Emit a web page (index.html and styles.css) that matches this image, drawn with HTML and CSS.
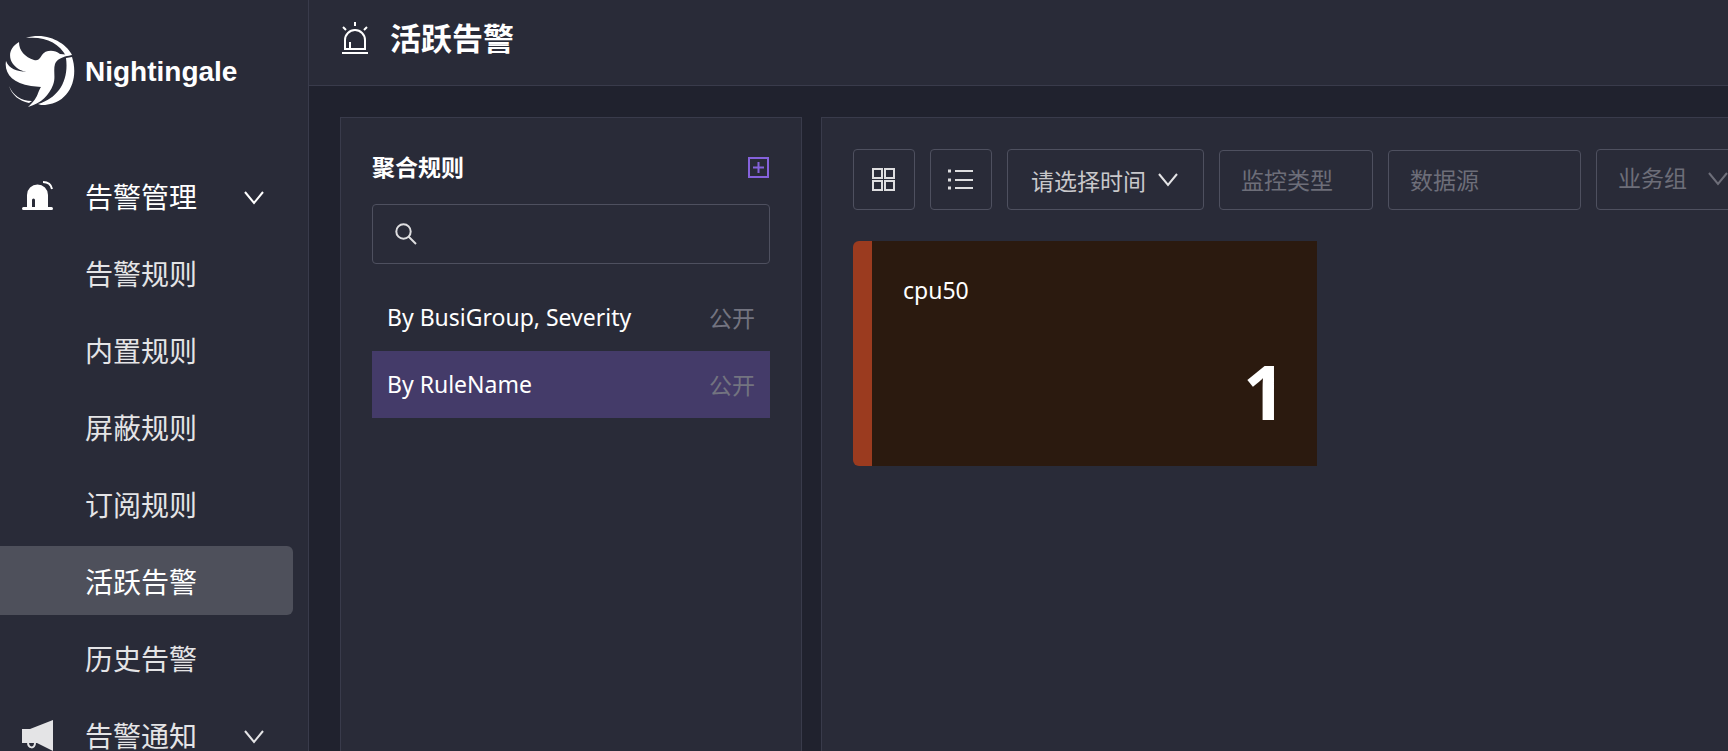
FILE: index.html
```html
<!DOCTYPE html>
<html lang="zh-CN">
<head>
<meta charset="utf-8">
<meta name="viewport" content="width=device-width, initial-scale=1">
<title>活跃告警 - Nightingale</title>
<link rel="stylesheet" href="styles.css">
</head>
<body>
<div class="app">
  <aside class="sidebar">
    <a class="brand" href="#">
      <svg class="brand-mark" viewBox="0 0 72 74" aria-hidden="true">
        <path d="M21 3C42-4 62 9 67 20L61 21C54 8 40 1 21 3Z"/>
        <path d="M61 23L67 22C74 43 65 70 36 70L33 69C54 63 64 45 61 23Z"/>
        <path d="M14 7C4 13 3 22 8 29C13 35 18 36 21 37C12 36 4 34 1 26C-1 38 7 48 26 51L36 52C32 58 34 62 23 72C37 68 44 60 48 50C51 43 48 36 50 29C52 24 57 22 66 20L55 19C49 14 40 15 37 20C34 25 32 26 29 25C20 22 14 16 14 7Z"/>
        <path d="M4 51C8 60 16 66 27 66L24 68C14 66 7 60 4 51Z"/>
      </svg>
      <span class="brand-name">Nightingale</span>
    </a>
    <nav class="menu">
      <button class="menu-item menu-group open" type="button" aria-expanded="true">
        <svg class="menu-icon" viewBox="0 0 32 32" aria-hidden="true">
          <path d="M5 27V15a10.500 10.500 0 0 1 21 0v12H13v-7a1 1 0 0 0-3 0v7Z"/>
          <rect x="0" y="27" width="31" height="3" rx="1.500"/>
          <path class="line" d="M21 2c5 0 8 2 9 7"/>
        </svg>
        <span>告警管理</span>
        <svg class="chevron" viewBox="0 0 20 14" aria-hidden="true"><path d="M1 1l9 11 9-11"/></svg>
      </button>
      <a class="menu-item" href="#">告警规则</a>
      <a class="menu-item" href="#">内置规则</a>
      <a class="menu-item" href="#">屏蔽规则</a>
      <a class="menu-item" href="#">订阅规则</a>
      <a class="menu-item active" href="#" aria-current="page">活跃告警</a>
      <a class="menu-item" href="#">历史告警</a>
      <button class="menu-item menu-group" type="button" aria-expanded="false">
        <svg class="menu-icon" viewBox="0 0 32 32" aria-hidden="true">
          <path d="M0 10h8L31 1v31L15 24H0Z"/>
          <path class="line" d="M6 23c0 7 7 7 7 1"/>
        </svg>
        <span>告警通知</span>
        <svg class="chevron" viewBox="0 0 20 14" aria-hidden="true"><path d="M1 1l9 11 9-11"/></svg>
      </button>
    </nav>
  </aside>
  <div class="page">
    <header class="page-header">
      <svg class="page-icon" viewBox="0 0 26 32" aria-hidden="true">
        <path d="M3 27V18a10 10 0 0 1 20 0v9Z"/>
        <path d="M8 26v-6M0 31h26M13 0v4M1 5l3 3M25 5l-3 3"/>
      </svg>
      <h1>活跃告警</h1>
    </header>
    <main class="content">
      <section class="panel rules">
        <div class="rules-head">
          <h2>聚合规则</h2>
          <button class="add" type="button" aria-label="新增聚合规则">
            <svg viewBox="0 0 21 21" aria-hidden="true"><rect x="1" y="1" width="19" height="19"/><path d="M10.500 5v11M5 10.500h11"/></svg>
          </button>
        </div>
        <label class="search">
          <svg viewBox="0 0 22 22" aria-hidden="true"><circle cx="8.500" cy="8.500" r="7.200"/><path d="M13.500 13.500l7.500 7.500"/></svg>
          <input type="search" aria-label="搜索聚合规则">
        </label>
        <ul class="rule-list">
          <li><a class="rule" href="#">By BusiGroup, Severity <span>公开</span></a></li>
          <li><a class="rule selected" href="#">By RuleName <span>公开</span></a></li>
        </ul>
      </section>
      <section class="panel alerts">
        <div class="toolbar">
          <button class="control icon-button" type="button" aria-label="卡片视图">
            <svg width="24" height="24" viewBox="0 0 24 24" aria-hidden="true"><path d="M1 1h9v9H1ZM13 1h9v9h-9ZM1 13h9v9H1ZM13 13h9v9h-9Z"/></svg>
          </button>
          <button class="control icon-button" type="button" aria-label="列表视图">
            <svg width="26" height="22" viewBox="0 0 26 22" aria-hidden="true"><path d="M7 2h18M7 11h18M7 19h18"/><path stroke-width="3" d="M0 2h3M0 11h3M0 19h3"/></svg>
          </button>
          <button class="control time" type="button">请选择时间
            <svg class="chevron" viewBox="0 0 20 14" aria-hidden="true"><path d="M1 1l9 11 9-11"/></svg>
          </button>
          <input class="control type" type="text" placeholder="监控类型" aria-label="监控类型">
          <input class="control source" type="text" placeholder="数据源" aria-label="数据源">
          <div class="group">
            <select class="control" aria-label="业务组"><option>业务组</option></select>
            <svg class="chevron" viewBox="0 0 20 14" aria-hidden="true"><path d="M1 1l9 11 9-11"/></svg>
          </div>
        </div>
        <div class="cards">
          <article class="card">
            <h3>cpu50</h3>
            <strong>1</strong>
          </article>
        </div>
      </section>
    </main>
  </div>
</div>
</body>
</html>
```
FILE: styles.css
```css
* { box-sizing: border-box; }

body {
  margin: 0;
  background: #20222e;
  color: #fff;
  font-family: "Noto Sans", "Noto Sans CJK SC", sans-serif;
  font-size: 23px;
}

h1, h2, h3, ul { margin: 0; padding: 0; }
ul { list-style: none; }
a { color: inherit; text-decoration: none; }
button, input, select { font: inherit; color: inherit; background: none; border: 0; margin: 0; padding: 0; }
button { cursor: pointer; }
svg { flex: none; fill: none; stroke: currentColor; stroke-width: 2; }

.app { display: flex; height: 100vh; overflow: hidden; }

.sidebar {
  flex: none;
  width: 309px;
  overflow: hidden;
  background: #292b38;
  border-right: 1px solid #393b4b;
}

.brand { display: flex; align-items: center; gap: 8px; height: 108px; padding: 36px 0 0 5px; }
.brand-mark { width: 72px; height: 74px; fill: #fff; stroke: none; }
.brand-name { font: bold 28px/40px "Liberation Sans Narrow", "Liberation Sans", sans-serif; }

.menu { display: flex; flex-direction: column; gap: 8px; padding: 53px 15px 0 0; }
.menu-item {
  display: flex;
  align-items: center;
  flex: none;
  height: 69px;
  padding-left: 85px;
  border-radius: 0 6px 6px 0;
  color: #e4e4e6;
  font-size: 28px;
}
.menu-group { gap: 31px; padding-left: 22px; }
.menu-icon { width: 32px; height: 32px; fill: currentColor; stroke: none; }
.menu-icon .line { fill: none; stroke: currentColor; stroke-width: 2; }
.menu-group .chevron { margin: 4px 0 0 16px; }
.chevron { width: 20px; height: 14px; }
.active { background: #4e505b; }
.active, .open { color: #fff; }

.page { flex: 1; min-width: 0; display: flex; flex-direction: column; }
.page-header {
  display: flex;
  flex: none;
  align-items: center;
  gap: 22px;
  height: 86px;
  padding: 0 33px 10px;
  background: #292b38;
  border-bottom: 1px solid #393b4b;
}
.page-icon { width: 26px; height: 32px; }
h1 { font-size: 31px; line-height: 40px; }

.content { flex: 1; display: flex; gap: 19px; padding: 31px 0 0 31px; min-height: 0; overflow: hidden; }
.panel { background: #292b38; border: 1px solid #393b4b; border-bottom: 0; padding: 31px; }
.rules { flex: none; width: 462px; }
.rules-head { display: flex; align-items: center; justify-content: space-between; height: 36px; margin-bottom: 19px; padding-right: 1px; }
h2 { font-size: 23px; line-height: 36px; }
.add { display: flex; color: #8562dc; }
.add svg { width: 21px; height: 21px; }
.search {
  display: flex;
  align-items: center;
  gap: 12px;
  height: 60px;
  padding: 0 22px;
  border: 1px solid #4e505f;
  border-radius: 4px;
  color: #dedee0;
}
.search svg { width: 22px; height: 22px; }
.search input { flex: 1; min-width: 0; outline: 0; }
.rule-list { margin-top: 20px; }
.rule { display: flex; align-items: center; justify-content: space-between; height: 67px; padding: 0 15px 2px; }
.rule span { color: #737480; }
.selected { background: #443b69; }

.alerts { flex: 1; min-width: 0; border-right: 0; padding-right: 0; overflow: hidden; }
.toolbar { display: flex; align-items: flex-end; gap: 15px; }
.control { flex: none; height: 61px; border: 1px solid #4e505f; border-radius: 4px; outline: 0; }
.icon-button { display: flex; align-items: center; justify-content: center; width: 62px; color: #dedee0; }
.time { display: flex; align-items: center; justify-content: center; gap: 12px; width: 197px; padding-right: 2px; color: #c8c8cb; }
.time .chevron { color: #e4e4e6; }
input.control { height: 60px; padding: 0 21px; }
.type { width: 154px; }
.source { width: 193px; }
::placeholder { color: #6d6e79; opacity: 1; }
.group { position: relative; flex: none; color: #6d6e79; }
.group .control { width: 160px; padding: 0 21px 4px; appearance: none; display: block; }
.group .chevron { position: absolute; right: 28px; top: 23px; }

.cards { display: flex; margin-top: 31px; }
.card {
  display: flex;
  flex-direction: column;
  justify-content: space-between;
  width: 464px;
  height: 225px;
  padding: 31px 31px 22px 31px;
  border-left: 19px solid #9b3b1f;
  border-radius: 6px 0 0 6px;
  background: #2b1a0f;
}
h3 { font-size: 23px; font-weight: 400; line-height: 36px; }
.card strong { align-self: flex-end; font-size: 75px; line-height: 106px; }
```
